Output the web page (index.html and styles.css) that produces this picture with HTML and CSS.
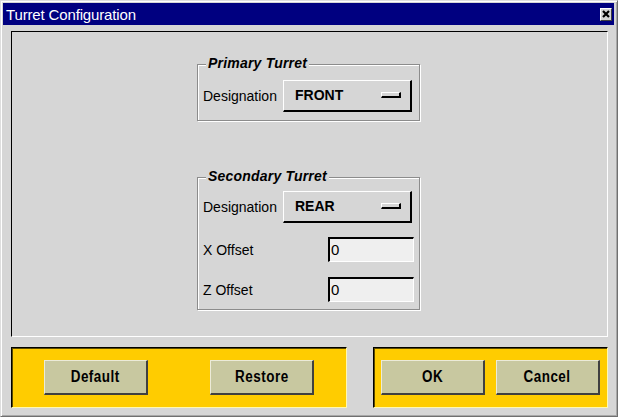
FILE: index.html
```html
<!DOCTYPE html>
<html>
<head>
<meta charset="utf-8">
<link rel="stylesheet" href="styles.css">
</head>
<body>
<div class="window">
  <div class="titlebar">
    <span class="title">Turret Configuration</span>
    <span class="close"><svg width="10" height="10" viewBox="0 0 10 10"><path d="M2 2 L8 8 M8 2 L2 8" stroke="#000" stroke-width="2.2" fill="none"/></svg></span>
  </div>
  <div class="content">
    <div class="main">
      <div class="group primary">
        <span class="legend">Primary Turret</span>
        <div class="row">
          <span class="label">Designation</span>
          <div class="option"><span>FRONT</span><span class="ind"></span></div>
        </div>
      </div>
      <div class="group secondary">
        <span class="legend">Secondary Turret</span>
        <div class="row">
          <span class="label">Designation</span>
          <div class="option"><span>REAR</span><span class="ind"></span></div>
        </div>
        <div class="row field first">
          <span class="label wide">X Offset</span>
          <div class="input">0</div>
        </div>
        <div class="row field">
          <span class="label wide">Z Offset</span>
          <div class="input">0</div>
        </div>
      </div>
    </div>
    <div class="actions">
      <div class="panel left">
        <button class="btn"><span class="btn-text">Default</span></button>
        <button class="btn"><span class="btn-text">Restore</span></button>
      </div>
      <div class="panel right">
        <button class="btn"><span class="btn-text">OK</span></button>
        <button class="btn"><span class="btn-text">Cancel</span></button>
      </div>
    </div>
  </div>
</div>
</body>
</html>
```
FILE: styles.css
```css
* { box-sizing: border-box; }
body {
  margin: 0;
  background: #d6d6d6;
  font-family: "Liberation Sans", Arial, sans-serif;
  color: #000;
}
.window {
  width: 618px;
  height: 417px;
  background: #d6d6d6;
  border: 1px solid;
  border-color: #dedede #707070 #707070 #dedede;
  box-shadow: inset 1px 1px 0 #fff, inset -1px -1px 0 #a8a8a8;
  padding: 2px 3px 2px 2px;
  display: flex;
  flex-direction: column;
}
.titlebar {
  height: 22px;
  background: #000080;
  color: #fff;
  display: flex;
  align-items: center;
  justify-content: space-between;
  padding: 0 2px 0 3px;
  font-size: 15px;
}
.title { letter-spacing: -0.15px; }
.close {
  width: 12px;
  height: 13px;
  background: #d6d6d6;
  border-top: 1px solid #fff;
  border-left: 1px solid #fff;
  border-right: 1px solid #404040;
  border-bottom: 1px solid #404040;
  display: flex;
  align-items: center;
  justify-content: center;
}
.close svg { display: block; }
.content {
  flex: 1;
  padding: 6px 6px 0 8px;
  display: flex;
  flex-direction: column;
}
.main {
  height: 306px;
  border: 1px solid;
  border-color: #000 #fff #fff #000;
  display: flex;
  flex-direction: column;
  align-items: center;
  padding-top: 32px;
}
.group {
  position: relative;
  width: 223px;
  border: 1px solid #8c8c8c;
  box-shadow: inset 1px 1px 0 #fff, 1px 1px 0 #fff;
  padding-left: 5px;
}
.primary { height: 57px; padding-top: 15px; margin-left: -2px; }
.secondary { height: 133px; padding-top: 13px; margin-top: 56px; margin-left: -2px; }
.legend {
  position: absolute;
  top: -10px;
  left: 8px;
  padding: 0 2px;
  background: #d6d6d6;
  font-style: italic;
  font-weight: bold;
  font-size: 14px;
  line-height: 16px;
  letter-spacing: 0.2px;
}
.row {
  display: flex;
  align-items: center;
  font-size: 14px;
}
.label { width: 80px; flex: none; }
.label.wide { width: 125px; }
.option {
  width: 129px;
  height: 32px;
  background: #d6d6d6;
  border-top: 1px solid #fff;
  border-left: 1px solid #fff;
  border-right: 2px solid #000;
  border-bottom: 2px solid #000;
  display: flex;
  align-items: center;
  justify-content: space-between;
  padding: 0 9px 1px 11px;
  font-weight: bold;
  font-size: 14px;
}
.ind {
  width: 20px;
  height: 6px;
  background: #d6d6d6;
  border-top: 1px solid #fff;
  border-left: 1px solid #fff;
  border-right: 2px solid #000;
  border-bottom: 2px solid #000;
}
.field.first { margin-top: 14px; }
.field { margin-top: 15px; }
.input {
  width: 86px;
  height: 25px;
  background: #efefef;
  border-top: 2px solid #000;
  border-left: 2px solid #000;
  border-right: 1px solid #fff;
  border-bottom: 1px solid #fff;
  padding-left: 1px;
  font-size: 15px;
  line-height: 21px;
}
.actions {
  margin-top: 10px;
  height: 61px;
  display: flex;
  justify-content: space-between;
}
.panel {
  background: #ffcc00;
  border: 1px solid;
  border-color: #000 #fff8b0 #fff8b0 #000;
  box-shadow: inset 1px 1px 0 #5a4a00;
  display: flex;
  align-items: center;
}
.panel.left {
  width: 336px;
  padding: 0 32px;
  justify-content: space-between;
}
.panel.right {
  width: 235px;
  padding: 0 7px;
  gap: 11px;
}
.btn {
  width: 104px;
  height: 35px;
  margin: 0;
  background: #c8c8a0;
  border-top: 1px solid #ecebd8;
  border-left: 1px solid #ecebd8;
  border-right: 2px solid #404040;
  border-bottom: 2px solid #404040;
  font-family: "Liberation Sans", Arial, sans-serif;
  font-weight: bold;
  font-size: 16px;
  color: #000;
  padding: 0;
}
.btn-text {
  display: inline-block;
  transform: scaleX(0.84);
  letter-spacing: 0.6px;
}
```
